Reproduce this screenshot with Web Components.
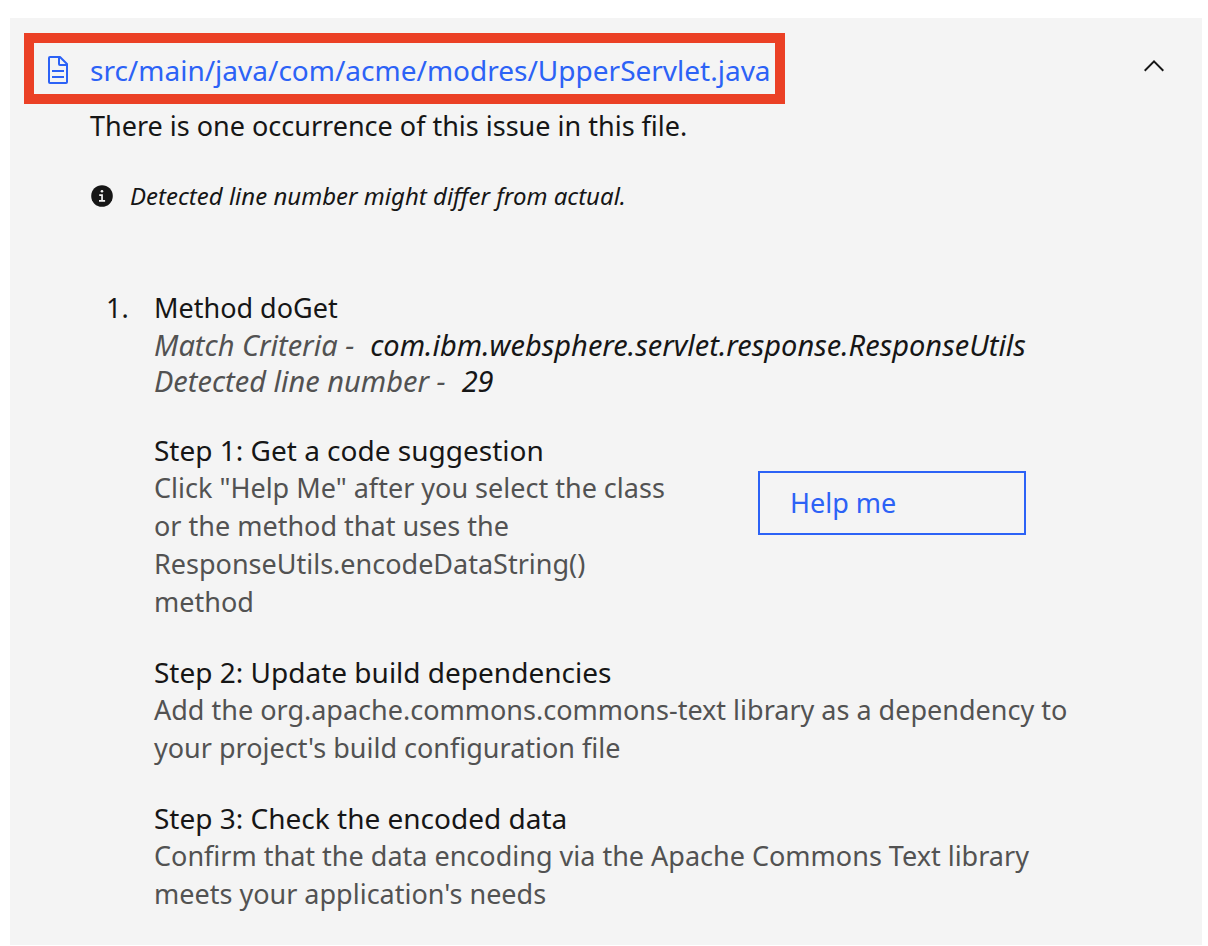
<!DOCTYPE html>
<html lang="en">
<head>
<meta charset="utf-8">
<meta name="viewport" content="width=device-width, initial-scale=1">
<title>Issue details</title>
<style>
  body { margin: 18px 6px 0 10px; background: #fff; font-family: "Noto Sans", "Open Sans", sans-serif; font-size: 27px; line-height: 38px; color: #161616; }
</style>
</head>
<body>
<issue-panel>
  <file-link slot="file" href="#UpperServlet">src/main/java/com/acme/modres/UpperServlet.java</file-link>
  <span slot="summary">There is one occurrence of this issue in this file.</span>
  <info-note slot="note">Detected line number might differ from actual.</info-note>
  <issue-occurrence number="1.">
    <span slot="title">Method doGet</span>
    <meta-line label="Match Criteria -">com.ibm.websphere.servlet.response.ResponseUtils</meta-line>
    <meta-line label="Detected line number -">29</meta-line>
    <fix-step heading="Step 1: Get a code suggestion" class="split">Click "Help Me" after you select the class or the method that uses the ResponseUtils.encodeDataString() method<help-button slot="action">Help me</help-button></fix-step>
    <fix-step heading="Step 2: Update build dependencies">Add the org.apache.commons.commons-text library as a dependency to your project's build configuration file</fix-step>
    <fix-step heading="Step 3: Check the encoded data">Confirm that the data encoding via the Apache Commons Text library meets your application's needs</fix-step>
  </issue-occurrence>
</issue-panel>
<script>
const define = (name, html, setup) => customElements.define(name, class extends HTMLElement {
  connectedCallback() {
    if (this.shadowRoot) return;
    const root = this.attachShadow({ mode: "open" });
    root.innerHTML = html;
    if (setup) setup(this, root);
  }
});

define("issue-panel", `
<style>
  :host { display: block; background: #f4f4f4; padding: 15px 32px 32px 14px; }
  header { display: flex; justify-content: space-between; align-items: flex-start; }
  button { appearance: none; border: 0; background: none; padding: 0; margin-top: 17px; width: 32px; height: 32px; cursor: pointer; }
  svg { display: block; }
  .body { padding-left: 66px; }
  p { margin: 3px 0 33px; }
  .list { margin-top: 75px; }
</style>
<header>
  <slot name="file"></slot>
  <button type="button" aria-expanded="true" aria-label="Collapse">
    <svg width="32" height="32" viewBox="0 0 32 32"><path d="M16 10 26 20l-1.4 1.4L16 12.8l-8.6 8.6L6 20z" fill="#161616"/></svg>
  </button>
</header>
<div class="body">
  <p><slot name="summary"></slot></p>
  <slot name="note"></slot>
  <div class="list"><slot></slot></div>
</div>`);

define("file-link", `
<style>
  :host { display: block; border: 10px solid #eb4025; font-size: 28px; }
  a { display: flex; align-items: center; gap: 16px; padding: 8px 4px 5px 8px; color: #2c62f6; text-decoration: none; }
  svg { flex: none; }
</style>
<a><svg width="32" height="32" viewBox="0 0 32 32" fill="currentColor" aria-hidden="true"><path d="M25.7 9.3l-7-7A1 1 0 0 0 18 2H8a2 2 0 0 0-2 2v24a2 2 0 0 0 2 2h16a2 2 0 0 0 2-2V10a1 1 0 0 0-.3-.7zM18 4.4l5.6 5.6H18zM24 28H8V4h8v6a2 2 0 0 0 2 2h6z"/><path d="M10 22h12v2H10zM10 16h12v2H10z"/></svg><span><slot></slot></span></a>`,
(host, root) => { root.querySelector("a").href = host.getAttribute("href"); });

define("info-note", `
<style>
  :host { display: flex; align-items: center; gap: 16px; font-size: 24px; font-style: italic; line-height: 36px; }
  svg { flex: none; }
</style>
<svg width="24" height="24" viewBox="0 0 24 24" aria-hidden="true"><circle cx="12" cy="12" r="10.8" fill="#161616"/><circle cx="12" cy="7.2" r="1.3" fill="#f4f4f4"/><path d="M9.2 10.2h3.7v5.7h2.2v1.8H9v-1.8h2.2V12h-2z" fill="#f4f4f4"/></svg>
<span><slot></slot></span>`);

define("issue-occurrence", `
<style>
  :host { display: grid; grid-template-columns: 48px 1fr; padding-left: 16px; }
</style>
<span class="num"></span>
<div><slot name="title"></slot><slot></slot></div>`,
(host, root) => { root.querySelector(".num").textContent = host.getAttribute("number"); });

define("meta-line", `
<style>
  :host { display: flex; gap: 16px; font-size: 29px; font-style: italic; line-height: 36px; }
  .label { color: #525252; }
</style>
<span class="label"></span><span><slot></slot></span>`,
(host, root) => { root.querySelector(".label").textContent = host.getAttribute("label"); });

define("fix-step", `
<style>
  :host { display: grid; grid-template-columns: minmax(0, 940px); column-gap: 76px; margin-top: 32px; }
  :host(.split) { grid-template-columns: minmax(0, 528px) 268px; }
  h3 { margin: 0; font: inherit; font-size: 28px; }
  p { margin: 0; color: #525252; }
  .action { padding-top: 40px; }
  :host(:not(.split)) .action { display: none; }
</style>
<div><h3></h3><p><slot></slot></p></div>
<div class="action"><slot name="action"></slot></div>`,
(host, root) => { root.querySelector("h3").textContent = host.getAttribute("heading"); });

define("help-button", `
<style>
  :host { display: block; }
  button { appearance: none; display: block; width: 100%; height: 64px; margin: 0; padding: 0 30px; border: 2px solid #2c62f6; border-radius: 0; background: none; color: #2c62f6; font: inherit; text-align: left; cursor: pointer; }
</style>
<button type="button"><slot></slot></button>`);
</script>
</body>
</html>
